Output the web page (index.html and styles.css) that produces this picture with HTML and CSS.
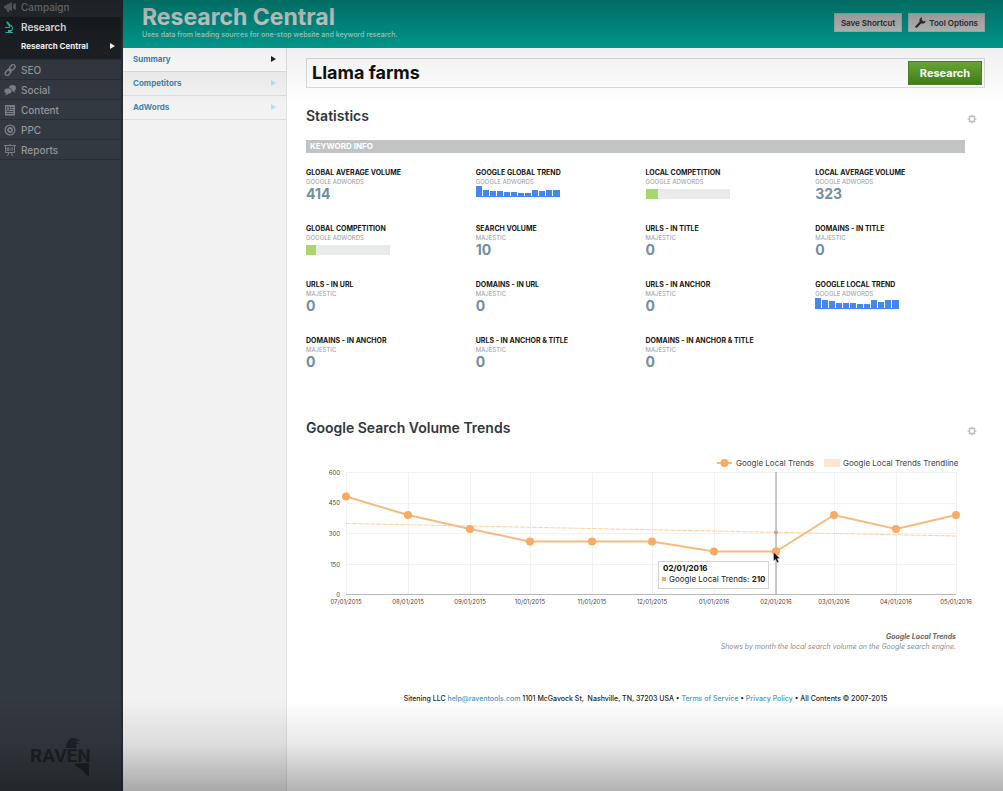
FILE: index.html
```html
<!DOCTYPE html>
<html lang="en">
<head>
<meta charset="utf-8">
<title>Research Central</title>
<link rel="stylesheet" href="styles.css">
</head>
<body>
<svg class="defs" width="0" height="0" aria-hidden="true">
  <symbol id="gear" viewBox="0 0 12 12">
    <circle cx="6" cy="6" r="3.2" fill="none" stroke="currentColor" stroke-width="1.8"/>
    <path d="M6 .8v1.6M6 9.6v1.6M.8 6h1.6M9.6 6h1.6M2.3 2.3l1.2 1.2M8.5 8.5l1.2 1.2M2.3 9.7l1.2-1.2M8.5 3.5l1.2-1.2" stroke="currentColor" stroke-width="1.9"/>
  </symbol>
  <symbol id="spark-global" viewBox="0 0 84 11">
    <path d="M0 0h6v11H0zM7 4h6v7H7zM14 5h6v6h-6zM21 5h6v6h-6zM28 6h6v5h-6zM35 6h6v5h-6zM42 7h6v4h-6zM49 7h6v4h-6zM56 4h6v7h-6zM63 5h6v6h-6zM70 4h6v7h-6zM77 4h7v7h-7z" fill="#4387f4"/>
    <path d="M0 10h84v1H0z" fill="#4387f4"/>
  </symbol>
  <symbol id="spark-local" viewBox="0 0 84 11">
    <path d="M0 0h6v11H0zM7 2h6v9H7zM14 3h6v8h-6zM21 5h6v6h-6zM28 5h6v6h-6zM35 5h6v6h-6zM42 6h6v5h-6zM49 6h6v5h-6zM56 2h6v9h-6zM63 4h6v7h-6zM70 2h6v9h-6zM77 2h7v9h-7z" fill="#4387f4"/>
    <path d="M0 10h84v1H0z" fill="#4387f4"/>
  </symbol>
</svg>
<div class="app">
  <aside class="sidebar">
    <nav class="menu" aria-label="Tools">
      <a class="menu-item first" href="#"><svg class="ico" viewBox="0 0 12 12"><path d="M0 5l8-4v9L0 7zM2 7.500h2.500l1 3.500H3.500zM9 3.500L12 2v7L9 7.500z" fill="currentColor"/></svg>Campaign</a>
      <div class="menu-group">
        <a class="menu-item active" href="#"><svg class="ico teal" viewBox="0 0 12 12"><path d="M2.200.5l2 .3 3 4.200-1.700 1.200-3-4.200zM1 6h5v1H1zM2 11h7v1H1zM4 9h3v3H4z" fill="currentColor"/><path d="M6 4c3 1 3.500 5 .5 6.500" fill="none" stroke="currentColor" stroke-width="1.200"/></svg>Research</a>
        <a class="menu-sub" href="#">Research Central<span class="tri"></span></a>
      </div>
      <a class="menu-item" href="#"><svg class="ico" viewBox="0 0 12 12"><g fill="none" stroke="currentColor" stroke-width="1.500"><rect x="5" y="1.500" width="6.500" height="4" rx="2" transform="rotate(-50 8.200 3.500)"/><rect x=".7" y="6.500" width="6.500" height="4" rx="2" transform="rotate(-50 4 8.500)"/><path d="M4.800 7.500l2.400-3"/></g></svg>SEO</a>
      <a class="menu-item" href="#"><svg class="ico" viewBox="0 0 12 12"><ellipse cx="8.500" cy="4" rx="3.500" ry="3" fill="currentColor"/><path d="M10 6l1.500 2.500L8 7z" fill="currentColor"/><ellipse cx="4" cy="7" rx="4" ry="3" fill="currentColor" stroke="#31373f" stroke-width=".6"/><path d="M2 9l-.5 2.500L5 9.500z" fill="currentColor"/></svg>Social</a>
      <a class="menu-item" href="#"><svg class="ico" viewBox="0 0 12 12"><rect x="1" y="1" width="10" height="10.500" fill="currentColor"/><path d="M2.500 3h3v3h-3zM6.500 3.500h3M6.500 5.500h3M2.500 7.500h7M2.500 9.500h7" stroke="#31373f" stroke-width=".8" fill="none"/></svg>Content</a>
      <a class="menu-item" href="#"><svg class="ico" viewBox="0 0 12 12"><circle cx="6" cy="6" r="4.900" fill="none" stroke="currentColor" stroke-width="1.300"/><circle cx="6" cy="6" r="2" fill="none" stroke="currentColor" stroke-width="1.800"/></svg>PPC</a>
      <a class="menu-item" href="#"><svg class="ico" viewBox="0 0 12 12"><path d="M0 1.500h12M1.500 2v6.500h9V2M6 0v1M3.500 12L5 8.500M8.500 12L7 8.500M3 4h2v2.500H3zM6.500 4h2.500M6.500 6h2.500" fill="none" stroke="currentColor" stroke-width="1"/></svg>Reports</a>
    </nav>
    <div class="brand">
      <svg class="bird-head" viewBox="0 0 14 10"><path d="M0 10C0 4 3 0 8 0c1 0 1.800.4 2 1l4 1.500-5 1.300 5 2-4.500.5L11 10z" fill="currentColor"/></svg>
      <span class="brand-name">RAVEN</span>
      <svg class="bird-tail" viewBox="0 0 16 14"><path d="M0 1c4 0 6-1 9-1h6v14L8 7 3 4z" fill="currentColor"/></svg>
    </div>
  </aside>
  <div class="page">
    <header class="header">
      <div>
        <h1>Research Central</h1>
        <p>Uses data from leading sources for one-stop website and keyword research.</p>
      </div>
      <div class="actions">
        <button type="button" class="btn">Save Shortcut</button>
        <button type="button" class="btn"><svg class="wrench" viewBox="0 0 10 10"><path d="M1.200 8.800L6 4" stroke="currentColor" stroke-width="2" stroke-linecap="round"/><path d="M6.500.5L6 2.500 7.500 4l2-.6C9.800 5.500 7.800 6.500 6 5.800L4.200 4C3.600 2 4.800.4 6.500.5z" fill="currentColor"/></svg>Tool Options</button>
      </div>
    </header>
    <div class="body">
      <nav class="subnav" aria-label="Research">
        <a class="current" href="#">Summary<span class="tri"></span></a>
        <a href="#">Competitors<span class="tri"></span></a>
        <a href="#">AdWords<span class="tri"></span></a>
      </nav>
      <main class="main">
        <form class="search">
          <input type="text" aria-label="Keyword" value="Llama farms">
          <button type="button">Research</button>
        </form>
        <section>
          <div class="heading"><h2>Statistics</h2><button type="button" aria-label="Statistics settings"><svg><use href="#gear"/></svg></button></div>
          <h3 class="bar">KEYWORD INFO</h3>
          <div class="stats">
            <div class="stat"><h4>GLOBAL AVERAGE VOLUME</h4><small>GOOGLE ADWORDS</small><strong>414</strong></div>
            <div class="stat"><h4>GOOGLE GLOBAL TREND</h4><small>GOOGLE ADWORDS</small><svg class="spark"><use href="#spark-global"/></svg></div>
            <div class="stat"><h4>LOCAL COMPETITION</h4><small>GOOGLE ADWORDS</small><div class="meter"><span style="width:15%"></span></div></div>
            <div class="stat"><h4>LOCAL AVERAGE VOLUME</h4><small>GOOGLE ADWORDS</small><strong>323</strong></div>
            <div class="stat"><h4>GLOBAL COMPETITION</h4><small>GOOGLE ADWORDS</small><div class="meter"><span style="width:12%"></span></div></div>
            <div class="stat"><h4>SEARCH VOLUME</h4><small>MAJESTIC</small><strong>10</strong></div>
            <div class="stat"><h4>URLS - IN TITLE</h4><small>MAJESTIC</small><strong>0</strong></div>
            <div class="stat"><h4>DOMAINS - IN TITLE</h4><small>MAJESTIC</small><strong>0</strong></div>
            <div class="stat"><h4>URLS - IN URL</h4><small>MAJESTIC</small><strong>0</strong></div>
            <div class="stat"><h4>DOMAINS - IN URL</h4><small>MAJESTIC</small><strong>0</strong></div>
            <div class="stat"><h4>URLS - IN ANCHOR</h4><small>MAJESTIC</small><strong>0</strong></div>
            <div class="stat"><h4>GOOGLE LOCAL TREND</h4><small>GOOGLE ADWORDS</small><svg class="spark"><use href="#spark-local"/></svg></div>
            <div class="stat"><h4>DOMAINS - IN ANCHOR</h4><small>MAJESTIC</small><strong>0</strong></div>
            <div class="stat"><h4>URLS - IN ANCHOR &amp; TITLE</h4><small>MAJESTIC</small><strong>0</strong></div>
            <div class="stat"><h4>DOMAINS - IN ANCHOR &amp; TITLE</h4><small>MAJESTIC</small><strong>0</strong></div>
          </div>
        </section>
        <section class="trends">
          <div class="heading"><h2>Google Search Volume Trends</h2><button type="button" aria-label="Trends settings"><svg><use href="#gear"/></svg></button></div>
          <svg class="chart" viewBox="0 0 679 160" role="img" aria-label="Google Local Trends by month">
            <path class="grid" d="M40 20.500H650M40 51.500H650M40 81.500H650M40 112.500H650M40.500 20V143M102.500 20V143M164.500 20V143M224.500 20V143M286.500 20V143M346.500 20V143M408.500 20V143M470.500 20V143M528.500 20V143M590.500 20V143M650.500 20V143"/>
            <path class="axis" d="M40 142.500H650"/>
            <g class="ticks y"><text x="34" y="23">600</text><text x="34" y="53">450</text><text x="34" y="84">300</text><text x="34" y="115">150</text><text x="34" y="145">0</text></g>
            <g class="ticks x"><text x="40" y="152">07/01/2015</text><text x="102" y="152">08/01/2015</text><text x="164" y="152">09/01/2015</text><text x="224" y="152">10/01/2015</text><text x="286" y="152">11/01/2015</text><text x="346" y="152">12/01/2015</text><text x="408" y="152">01/01/2016</text><text x="470" y="152">02/01/2016</text><text x="528" y="152">03/01/2016</text><text x="590" y="152">04/01/2016</text><text x="650" y="152">05/01/2016</text></g>
            <path class="trendline" d="M40 71.500L650 84"/>
            <path class="series" d="M40 44.500L102 63L164 77L224 89.500H346L408 99.500H470L528 63L590 77L650 63"/>
            <g class="dots"><circle cx="40" cy="44.500" r="4"/><circle cx="102" cy="63" r="4"/><circle cx="164" cy="77" r="4"/><circle cx="224" cy="89.500" r="4"/><circle cx="286" cy="89.500" r="4"/><circle cx="346" cy="89.500" r="4"/><circle cx="408" cy="99.500" r="4"/><circle cx="470" cy="99.500" r="4"/><circle cx="528" cy="63" r="4"/><circle cx="590" cy="77" r="4"/><circle cx="650" cy="63" r="4"/></g>
            <path class="cursor-line" d="M470 20V143"/>
            <circle cx="470" cy="80.500" r="2" fill="#b3aca3"/>
            <circle cx="470" cy="99.500" r="4" fill="#f8ab63"/>
            <path class="series" d="M411 11H426"/><circle cx="418.500" cy="11" r="4" fill="#f8ab63"/>
            <text class="legend" x="430" y="14">Google Local Trends</text>
            <rect x="518" y="7" width="16" height="8" fill="#fde6cf"/>
            <text class="legend" x="537" y="14">Google Local Trends Trendline</text>
            <rect class="tip" x="352.500" y="109.500" width="110" height="27"/>
            <text class="tip-title" x="357" y="119">02/01/2016</text>
            <rect x="356" y="125" width="4" height="4" fill="#f8ab63"/>
            <text class="tip-text" x="363" y="130">Google Local Trends: <tspan>210</tspan></text>
            <path d="M467.500 100v9l2-1.600 1.600 3.400 1.800-.8-1.600-3.300 2.700-.3z" fill="#111" stroke="#fff" stroke-width=".4"/>
          </svg>
          <p class="note"><b>Google Local Trends</b>Shows by month the local search volume on the Google search engine.</p>
        </section>
        <footer>Sitening LLC <a href="#">help@raventools.com</a> 1101 McGavock St,&nbsp; Nashville, TN, 37203 USA • <a href="#">Terms of Service</a> • <a href="#">Privacy Policy</a> • All Contents © 2007-2015</footer>
      </main>
    </div>
  </div>
</div>
<div class="shade"></div>
</body>
</html>
```
FILE: styles.css
```css
* { box-sizing: border-box; }
body { margin: 0; font-family: Inter, "Liberation Sans", sans-serif; color: #222; background: #fff; }
h1, h2, h3, h4, p { margin: 0; }
a { color: inherit; text-decoration: none; }
button, input { font-family: inherit; }
.defs { display: block; }
.app { display: flex; min-height: 100vh; }
.shade { position: fixed; inset: 0; pointer-events: none; background: linear-gradient(rgba(0,0,0,.32), rgba(0,0,0,.06) 48px, rgba(0,0,0,0) 105px, rgba(0,0,0,0) 700px, rgba(0,0,0,.09) 745px, rgba(0,0,0,.3)); }

.sidebar { flex: 0 0 123px; display: flex; flex-direction: column; justify-content: space-between; background: #333941; border-right: 2px solid #282d33; color: #94979a; }
.menu-item { display: flex; align-items: center; height: 20px; padding-left: 4px; gap: 5px; font-size: 10px; font-weight: 500; border-bottom: 1px solid #292e35; }
.menu-item.first { height: 17px; padding-bottom: 3px; background: #2c3137; color: #85888b; }
.ico { width: 12px; height: 12px; flex: none; opacity: .75; }
.ico.teal { color: #39c6b0; opacity: 1; }
.menu-group { background: #1d2125; color: #fff; height: 43px; border-bottom: 1px solid #292e35; }
.menu-item.active { border: 0; font-weight: 600; }
.menu-sub { display: flex; align-items: center; justify-content: space-between; height: 18px; padding: 0 6px 0 21px; font-size: 8px; font-weight: 700; }
.tri { border: solid transparent; border-width: 3px 0 3px 5px; border-left-color: currentColor; }
.brand { position: relative; padding: 0 0 20px 30px; color: #1d2227; }
.brand-name { font: 700 19px/30px Roboto, sans-serif; }
.bird-head { position: absolute; left: 66px; top: -3px; width: 14px; height: 10px; }
.bird-tail { position: absolute; left: 74px; top: 22px; width: 16px; height: 14px; }

.page { flex: 1; min-width: 0; display: flex; flex-direction: column; }
.header { display: flex; justify-content: space-between; height: 48px; padding: 5px 18px 0 19px; background: #009f92; color: #fff; }
.header h1 { font-size: 23px; line-height: 24px; font-weight: 700; color: #e4eeee; }
.header p { font-size: 7px; line-height: 11px; font-weight: 500; color: #b0ddd7; }
.actions { display: flex; gap: 6px; padding-top: 8px; align-items: flex-start; }
.btn { display: flex; align-items: center; gap: 3px; height: 19px; padding: 0 6px; border: 1px solid #b5bdbd; background: #cbcccc; color: #333; font-size: 8px; font-weight: 600; }
.wrench { width: 11px; height: 11px; }

.body { flex: 1; display: flex; }
.subnav { flex: 0 0 164px; background: #f2f2f2; border-right: 1px solid #e2e2e2; }
.subnav a { display: flex; align-items: center; justify-content: space-between; height: 24px; padding: 0 10px 1px; border-bottom: 1px solid #dedede; font-size: 8px; font-weight: 700; color: #4286ac; }
.subnav .current { background: #fff; }
.subnav .tri { color: #b9dfee; }
.subnav .current .tri { color: #222; }

.main { flex: 1; min-width: 0; padding: 10px 18px 0 19px; }
.search { display: flex; height: 30px; padding: 2px; border: 1px solid #dcdcde; background: #fff; }
.search input { flex: 1; min-width: 0; border: 0; padding: 0 3px 1px; background: none; font-size: 18px; font-weight: 700; color: #111; outline: 0; }
.search button { width: 74px; border: 1px solid #4c852a; background: linear-gradient(#6cac3a, #44801a); color: #fff; font-size: 11px; font-weight: 700; padding: 0; }
.heading { display: flex; align-items: center; justify-content: space-between; height: 20px; padding-right: 8px; }
.heading h2 { font-size: 14px; line-height: 20px; font-weight: 600; color: #30373d; }
.heading button { border: 0; background: none; padding: 0 0 2px; color: #c2c2c2; align-self: flex-end; }
.heading svg { width: 10px; height: 10px; display: block; }
section .heading { margin-top: 18px; }
.bar { margin: 14px 20px 0 0; height: 13px; padding-left: 4px; background: #c2c3c4; color: #fff; font-size: 8px; line-height: 12px; font-weight: 700; }
.stats { display: grid; grid-template-columns: repeat(4, 1fr); grid-auto-rows: 38px; row-gap: 18px; margin-top: 15px; }
.stat h4 { font-size: 7px; line-height: 10px; font-weight: 700; color: #161616; white-space: nowrap; }
.stat small { display: block; font-size: 6px; line-height: 8px; color: #999; }
.stat strong { display: block; font-size: 14px; line-height: 16px; font-weight: 700; color: #728e9e; }
.spark { display: block; width: 84px; height: 11px; }
.meter { width: 84px; height: 10px; margin-top: 3px; background: #e9ebeb; }
.meter span { display: block; height: 100%; background: #aad76d; }

.trends { margin-top: 44px; }
.chart { display: block; width: 100%; margin-top: 14px; }
.chart text { font-family: Inter, sans-serif; }
.grid { stroke: #f1f2f2; fill: none; }
.axis { stroke: #b9b9b9; }
.ticks { font-size: 6px; fill: #444; }
.ticks.y { text-anchor: end; }
.ticks.x { text-anchor: middle; }
.trendline { stroke: #fbd4ab; stroke-dasharray: 5 1; fill: none; }
.series { stroke: #f6bb80; stroke-width: 2; fill: none; }
.dots { fill: #f8ab63; }
.cursor-line { stroke: #96969a; }
.legend { font-size: 8px; fill: #444; }
.tip { fill: #fff; stroke: #d2d2d2; }
.tip-title { font-size: 8px; font-weight: 700; fill: #111; }
.tip-text { font-size: 8px; fill: #222; }
.tip-text tspan { font-weight: 700; }
.note { margin: 20px 29px 0 0; text-align: right; font-size: 7px; line-height: 10px; font-style: italic; color: #8b8b8b; }
.note b { display: block; color: #666; }
footer { margin-top: 42px; text-align: center; font-size: 7px; line-height: 10px; font-weight: 500; color: #222; }
footer a { color: #4b98bd; }
```
